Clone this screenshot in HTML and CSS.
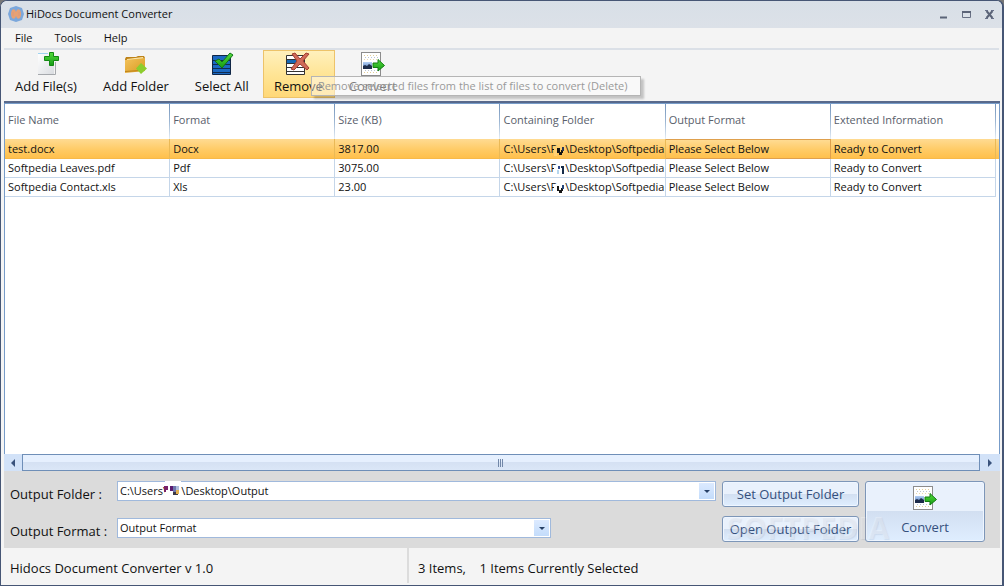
FILE: index.html
```html
<!DOCTYPE html>
<html lang="en">
<head>
<meta charset="utf-8">
<title>HiDocs Document Converter</title>
<link rel="stylesheet" href="styles.css">
</head>
<body>
<svg class="defs" aria-hidden="true">
  <defs>
    <linearGradient id="green" x1="0" y1="0" x2="0" y2="1"><stop offset="0" stop-color="#54dc3c"/><stop offset="1" stop-color="#159b14"/></linearGradient>
    <linearGradient id="paper" x1="0" y1="0" x2="1" y2="1"><stop offset="0" stop-color="#fff"/><stop offset="1" stop-color="#d9dce0"/></linearGradient>
    <linearGradient id="gold" x1="0" y1="0" x2="1" y2="1"><stop offset="0" stop-color="#f3c35c"/><stop offset="1" stop-color="#d99a20"/></linearGradient>
    <linearGradient id="sky" x1="0" y1="0" x2="0" y2="1"><stop offset="0" stop-color="#b4d0f6"/><stop offset="1" stop-color="#4f76b4"/></linearGradient>
  </defs>
  <symbol id="convert-icon" viewBox="0 0 24 24">
    <rect x=".5" y=".5" width="19" height="23" fill="#fff" stroke="#8c8c8c"/>
    <g stroke-dasharray="1 2"><path d="M3 3.500h14M3 20.500h14" stroke="#e3cf98"/><path d="M4 5.500h13M4 18.500h13" stroke="#b9c4d0"/><path d="M3 7.500h14" stroke="#ead9ad"/></g>
    <path d="M2 10h9v7H2z" fill="url(#sky)"/>
    <path d="M2 17v-3l2-1 2 1 2-2 3 2v3z" fill="#1d2c4a"/>
    <path d="M12 11h5V7.500l6.500 6L17 19v-3.500h-5z" fill="url(#green)" stroke="#137c12"/>
  </symbol>
</svg>
<div class="window">
  <header class="titlebar">
    <svg class="app-icon" viewBox="0 0 16 16" aria-hidden="true">
      <path d="M5 1 8 0l3 1 3 1 1 3 1 3-1 3-1 3-3 1-3 1-3-1-3-1-1-3-1-3 1-3 1-3z" fill="#7ba7dc"/>
      <path d="M4 4q3-2 4 2 1-4 4-2 2 4 0 8-3 2-4-2-1 4-4 2-2-4 0-8z" fill="#e9a173"/>
      <path d="M5 6v4M11 6v4" stroke="#d99a80"/>
    </svg>
    <h1 class="title">HiDocs Document Converter</h1>
    <div class="controls">
      <button class="control" aria-label="Minimize"><svg viewBox="0 0 9 9"><path d="M1 7.500h7" stroke="#5b6478" stroke-width="2"/></svg></button>
      <button class="control" aria-label="Maximize"><svg viewBox="0 0 9 9"><path d="M.5 1.500h8v6h-8z" fill="none" stroke="#687084"/><path d="M0 2h9" stroke="#5b6478" stroke-width="2"/></svg></button>
      <button class="control" aria-label="Close"><svg viewBox="0 0 9 9"><path d="M1.500 1l6 7M7.500 1l-6 7" stroke="#5b6478" stroke-width="2"/><path d="M0 .5h3M6 .5h3M0 8.500h3M6 8.500h3" stroke="#68718a"/></svg></button>
    </div>
  </header>
  <nav class="menubar">
    <button class="menu">File</button>
    <button class="menu">Tools</button>
    <button class="menu">Help</button>
  </nav>
  <div class="toolbar">
    <button class="tool">
      <svg viewBox="0 0 24 24" aria-hidden="true"><path d="M4 1h16v21H4z" fill="url(#paper)"/><path d="M4 1.500h10" stroke="#9ed3f1"/><path d="M4 22.500h17.500V10" fill="none" stroke="#a5a8ac"/><path d="M15.500.5h4v4h5v4h-5v5h-4v-5h-5v-4h5z" fill="url(#green)" stroke="#128912"/></svg>
      <span>Add File(s)</span>
    </button>
    <button class="tool">
      <svg viewBox="0 0 24 24" aria-hidden="true"><path d="M1 7l1-2h10l2-1h6l1 2v3H1z" fill="#bd8218"/><path d="M3 7l16-2 1 3H3z" fill="#fce9b1"/><path d="M1 8l20-2v13L1 21z" fill="url(#gold)"/><path d="M1 19.500l15-1" stroke="#bd8218" fill="none"/><path d="M17 11l6 5.500-6 5.500-5-5.500z" fill="#8ccd2e"/></svg>
      <span>Add Folder</span>
    </button>
    <button class="tool">
      <svg viewBox="0 0 24 24" aria-hidden="true"><path d="M2.500 3.500h18v19h-18z" fill="#1c69c2" stroke="#102646"/><path d="M3 8.500h17M3 12.500h17M3 16.500h17M3 20.500h17" stroke="#122d50"/><path d="M5 9l4-2 3 3 8-9 3 2-11 13z" fill="url(#green)" stroke="#117417"/></svg>
      <span>Select All</span>
    </button>
    <div class="tool-host">
      <button class="tool tool-active" aria-describedby="remove-tip">
        <svg viewBox="0 0 24 24" aria-hidden="true"><path d="M.5 3.500h18v19H.5z" fill="#fff" stroke="#333"/><path d="M1 8h17v4H1z" fill="#1768b5"/><path d="M1 7.500h17M1 11.500h17M1 15.500h17M1 19.500h17" stroke="#333"/><path d="M6 2l3-1 5 6 6-6 3 1-6 7 6 7-2 2-7-6-6 6-3-1 6-8z" fill="#cf6a58" stroke="#a43f31"/></svg>
        <span>Remove</span>
      </button>
      <div class="tooltip" role="tooltip" id="remove-tip">Remove selected files from the list of files to convert (Delete)</div>
    </div>
    <button class="tool">
      <svg aria-hidden="true"><use href="#convert-icon"/></svg>
      <span>Convert</span>
    </button>
  </div>
  <main class="content">
    <div class="grid-area">
      <table class="files">
        <thead>
          <tr><th>File Name</th><th>Format</th><th>Size (KB)</th><th>Containing Folder</th><th>Output Format</th><th>Extented Information</th><th class="spare"></th></tr>
        </thead>
        <tbody>
          <tr class="selected"><td>test.docx</td><td>Docx</td><td>3817.00</td><td>C:\Users\P<svg class="mask" viewBox="0 0 11 10"><path d="M0 0h3v10H0z" fill="#ffd074"/><path d="M3 2h3v5H3zM5 6h3v3H5zM7 4h2v3H7z" fill="#151515"/><path d="M8 1h2v4H8z" fill="#26375b"/></svg>\Desktop\Softpedia</td><td class="focused">Please Select Below</td><td>Ready to Convert</td><td class="spare"></td></tr>
          <tr><td>Softpedia Leaves.pdf</td><td>Pdf</td><td>3075.00</td><td>C:\Users\P<svg class="mask" viewBox="0 0 11 10"><path d="M0 0h3v10H0z" fill="#fff"/><path d="M4 1h2v3H4z" fill="#334b8e"/><path d="M7 1h3v2H7zM8 3h2v6H8z" fill="#152b48"/><path d="M3 5h2v4H3z" fill="#b5d6ee"/></svg>\Desktop\Softpedia</td><td>Please Select Below</td><td>Ready to Convert</td><td class="spare"></td></tr>
          <tr><td>Softpedia Contact.xls</td><td>Xls</td><td>23.00</td><td>C:\Users\P<svg class="mask" viewBox="0 0 11 10"><path d="M0 0h3v10H0z" fill="#fff"/><path d="M3 2h2v5H3zM5 6h3v3H5zM7 4h2v3H7z" fill="#151515"/><path d="M8 1h2v4H8z" fill="#26477b"/></svg>\Desktop\Softpedia</td><td>Please Select Below</td><td>Ready to Convert</td><td class="spare"></td></tr>
        </tbody>
      </table>
    </div>
    <div class="scrollbar">
      <button class="scroll-arrow" aria-label="Scroll left"><svg viewBox="0 0 8 8"><path d="M6 0v8L2 4z" fill="#39527c"/></svg></button>
      <div class="thumb"><svg viewBox="0 0 6 8"><path d="M.5 0v8M2.500 0v8M4.500 0v8" stroke="#7187a8"/></svg></div>
      <button class="scroll-arrow" aria-label="Scroll right"><svg viewBox="0 0 8 8"><path d="M2 0v8l4-4z" fill="#39527c"/></svg></button>
    </div>
    <section class="output">
      <div class="fields">
        <label class="field-label" for="folder">Output Folder :</label>
        <div class="combo">
          <select id="folder"><option>C:\Users\&nbsp;&nbsp;&nbsp;&nbsp;&nbsp;\Desktop\Output</option></select>
          <svg class="path-mask" viewBox="0 0 17 16" aria-hidden="true"><path d="M1 0h16v14H1z" fill="#fff"/><path d="M0 5h4v4H2v2H0z" fill="#792268"/><path d="M6 5h3v5H6z" fill="#5b1b70"/><path d="M9 5h3v6H9z" fill="#6d76ad"/><path d="M12 5h3v4h-3z" fill="#aebddb"/><path d="M9 11h5v3H9z" fill="#3c3845"/><path d="M12 9h3v4h-3z" fill="#e4b050"/></svg>
          <span class="drop" aria-hidden="true"></span>
        </div>
        <label class="field-label" for="format">Output Format :</label>
        <div class="combo combo-short">
          <select id="format"><option>Output Format</option></select>
          <span class="drop" aria-hidden="true"></span>
        </div>
      </div>
      <div class="folder-actions">
        <button class="push">Set Output Folder</button>
        <button class="push">Open Output Folder</button>
        <span class="watermark" aria-hidden="true">SOFTPEDIA</span>
      </div>
      <button class="push push-convert">
        <svg aria-hidden="true"><use href="#convert-icon"/></svg>
        <span>Convert</span>
      </button>
    </section>
  </main>
  <footer class="statusbar">
    <span class="version">Hidocs Document Converter v 1.0</span>
    <span class="count">3 Items, &nbsp;&nbsp; 1 Items Currently Selected</span>
  </footer>
</div>
</body>
</html>
```
FILE: styles.css
```css
* { box-sizing: border-box; }

body {
  margin: 0;
  background: #777;
  font: 11px/16px "Open Sans", "Noto Sans", sans-serif;
  color: #111;
}

button {
  margin: 0;
  padding: 0;
  border: 0;
  background: none;
  color: inherit;
  font: inherit;
}

svg { display: block; flex: none; overflow: visible; }

.defs { position: absolute; width: 0; height: 0; }

.window {
  display: flex;
  flex-direction: column;
  min-height: 100vh;
  border: 1px solid #465675;
  border-right-width: 2px;
  border-radius: 7px 7px 0 0;
  background: #f4f4f4;
  overflow: hidden;
}

.titlebar {
  display: flex;
  align-items: center;
  height: 27px;
  padding: 0 8px 1px 7px;
  gap: 2px;
  background: linear-gradient(#d8dfe7, #dce1e8);
}
.app-icon { width: 16px; height: 16px; }
.title { flex: 1; margin: 0; font-size: 11px; font-weight: 400; }
.controls { display: flex; gap: 14px; }
.control { width: 9px; height: 9px; }

.menubar {
  display: flex;
  gap: 22px;
  height: 22px;
  margin: 0 3px;
  padding: 0 11px;
  border-bottom: 2px solid #dbe0e7;
}

.toolbar {
  display: flex;
  align-items: flex-start;
  gap: 2px;
  height: 51px;
  margin: 0 3px;
}
.tool {
  display: flex;
  flex-direction: column;
  align-items: center;
  height: 48px;
  padding: 1px 11px 0;
  border: 1px solid transparent;
  font-size: 13px;
  line-height: 20px;
}
.tool svg { width: 24px; height: 24px; }
.tool:first-child { padding-left: 10px; }
.tool-host { position: relative; }
.tool-active {
  border-color: #edc36a;
  background: linear-gradient(#fff0bd, #ffe596 50%, #ffd878);
}
.tooltip {
  position: absolute;
  left: 48px;
  top: 26px;
  z-index: 1;
  height: 20px;
  padding: 0 12px 0 6px;
  border: 1px solid #b5b5b5;
  background: rgba(255, 255, 255, .45);
  box-shadow: 3px 3px 2px rgba(0, 0, 0, .2);
  color: #999;
  line-height: 18px;
  white-space: nowrap;
}

.content {
  display: flex;
  flex: 1;
  flex-direction: column;
  margin: 0 2px 0 3px;
  border-top: 2px solid #58698b;
}
.grid-area {
  flex: 1;
  border: 1px solid #779cc9;
  border-bottom: 0;
  background: #fff;
}
.files {
  width: 100%;
  border-spacing: 0;
  table-layout: fixed;
}
.files th, .files td {
  padding: 0 0 0 3px;
  overflow: hidden;
  text-align: left;
  white-space: nowrap;
}
.files th {
  height: 35px;
  padding-bottom: 3px;
  border-right: 1px solid;
  border-image: linear-gradient(#7393bb, #9cb6d3 50%, #e9f0f7) 1;
  border-top: 0;
  border-bottom: 0;
  border-left: 0;
  color: #59606b;
  font-weight: 400;
}
.files td {
  height: 19px;
  border-right: 1px solid #c5d6e9;
  border-bottom: 1px solid #c5d6e9;
  line-height: 18px;
}
.files .spare { width: 3px; padding: 0; border: 0; }
.files .selected td {
  border-right-color: #eab956;
  border-bottom-color: #f7b94a;
  background: linear-gradient(#ffdb92, #ffcb66 55%, #ffc04c);
}
.files .selected .focused { border: 1px solid #dfa04d; border-left: 0; }
.mask { display: inline-block; width: 11px; height: 10px; margin-left: -3px; vertical-align: -3px; }

.scrollbar {
  display: flex;
  height: 17px;
  background: #dbe6f5;
}
.scroll-arrow {
  display: grid;
  place-items: center;
  width: 18px;
  background: #d2e2f8;
}
.scroll-arrow:last-child { width: 20px; }
.scroll-arrow svg { width: 8px; height: 8px; }
.thumb {
  display: grid;
  flex: 1;
  place-items: center;
  border: 1px solid #6f8fb8;
  background: linear-gradient(#e6f0fe 50%, #d5e1f3 50%, #dbe7f7);
}
.thumb svg { width: 6px; height: 8px; }

.output {
  display: flex;
  gap: 6px;
  padding: 10px 15px 6px 6px;
  background: #dbdbdb;
}
.fields {
  display: grid;
  flex: 1;
  grid-template-columns: 107px 1fr;
  grid-template-rows: 20px 20px;
  row-gap: 17px;
}
.field-label { padding-top: 3px; font-size: 13px; line-height: 20px; white-space: nowrap; }
.combo { position: relative; }
.combo-short { width: 434px; }
.combo select {
  display: block;
  width: 100%;
  height: 20px;
  padding: 0 20px 0 2px;
  border: 1px solid #a0b9dc;
  border-radius: 0;
  appearance: none;
  background: #fff;
  color: #111;
  font: inherit;
}
.drop {
  position: absolute;
  top: 2px;
  right: 2px;
  display: grid;
  place-items: center;
  width: 15px;
  height: 16px;
  background: linear-gradient(#dceaff, #c3dcfb);
  pointer-events: none;
}
.drop::after {
  content: "";
  border: 3px solid transparent;
  border-top-color: #264066;
  border-bottom: 0;
}
.path-mask { position: absolute; left: 47px; top: 0; width: 17px; height: 16px; pointer-events: none; }

.folder-actions {
  position: relative;
  display: flex;
  flex-direction: column;
  gap: 9px;
  width: 137px;
}
.push {
  height: 26px;
  border: 1px solid #7d96b8;
  border-radius: 3px;
  background: linear-gradient(#e9f1fc 50%, #d2dff1 50%, #dfeeff);
  box-shadow: inset 0 0 0 1px #eff6ff;
  color: #35507d;
  font-size: 13px;
  line-height: 20px;
  white-space: nowrap;
}
.push-convert {
  display: flex;
  flex-direction: column;
  align-items: center;
  gap: 7px;
  width: 120px;
  height: 61px;
  padding-top: 4px;
}
.push-convert svg { width: 24px; height: 24px; }
.watermark {
  position: absolute;
  left: 4px;
  top: 29px;
  z-index: 1;
  color: rgba(255, 255, 255, .28);
  font: bold 30px/36px "Open Sans", sans-serif;
  text-shadow: 1px 1px 1px rgba(90, 110, 140, .12);
  pointer-events: none;
}

.statusbar {
  display: flex;
  height: 37px;
  padding: 0 9px;
  font-size: 13px;
  line-height: 40px;
}
.version { width: 399px; height: 35px; border-right: 2px solid #dcdcdc; }
.count { padding-left: 9px; }
```
